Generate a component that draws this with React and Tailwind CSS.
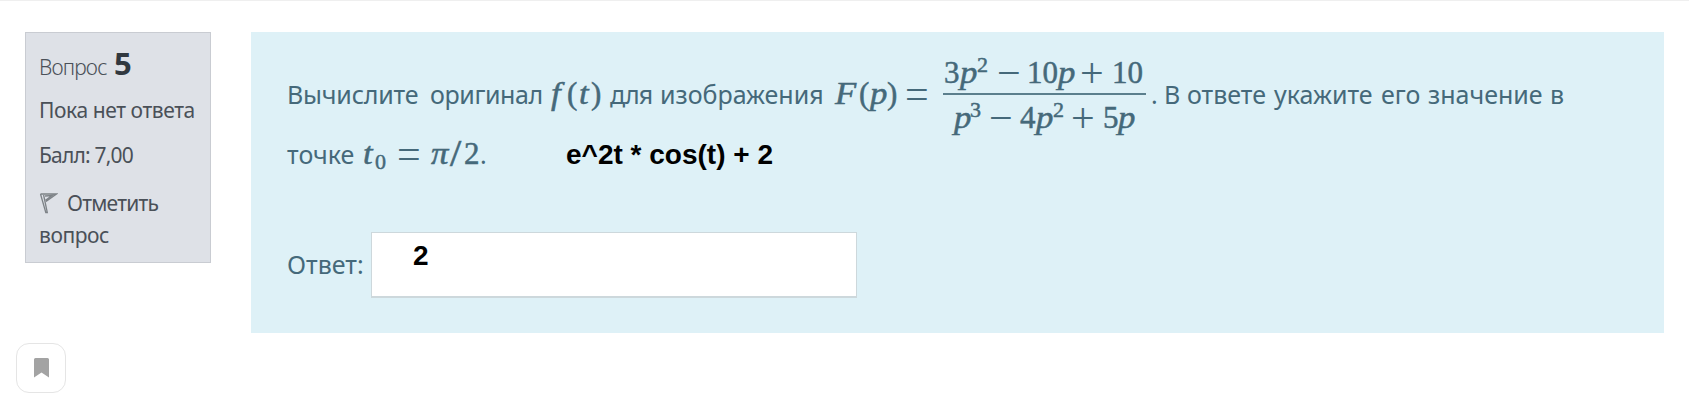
import React from "react";

const math = "font-['Liberation_Serif',serif] text-[31px] [-webkit-text-stroke:0.5px_#45697a]";

function Cell({ w, className = "", children }) {
  return (
    <span className={`block shrink-0 whitespace-nowrap ${className}`} style={{ width: w }}>
      {children}
    </span>
  );
}

function M({ w, className = "", children }) {
  return <Cell w={w} className={`${math} ${className}`}>{children}</Cell>;
}

function V({ w, children }) {
  return (
    <Cell w={w} className={`${math} italic`}>
      <span className="inline-block origin-left scale-x-[1.12]">{children}</span>
    </Cell>
  );
}

function Op({ w, children }) {
  return (
    <Cell w={w} className="font-['Liberation_Serif',serif] text-[42px]">
      <span className="relative top-[4px]">{children}</span>
    </Cell>
  );
}

function Sup({ w, children }) {
  return (
    <Cell w={w} className="relative -top-[11px] font-['Liberation_Serif',serif] text-[22px] [-webkit-text-stroke:0.5px_#45697a]">
      {children}
    </Cell>
  );
}

function Formula() {
  return (
    <div className="w-[203px] shrink-0 leading-[40px]">
      <div className="flex h-[46px] items-baseline border-b-2 border-[#5b7f8d] pl-px">
        <M w={16}>3</M>
        <V w={17}>p</V>
        <Sup w={20}>2</Sup>
        <Op w={30}>−</Op>
        <M w={31}>10</M>
        <V w={22}>p</V>
        <Op w={32}>+</Op>
        <M w={31}>10</M>
      </div>
      <div className="-mt-px flex h-[45px] items-baseline pl-[11px]">
        <V w={16}>p</V>
        <Sup w={19}>3</Sup>
        <Op w={31}>−</Op>
        <M w={16}>4</M>
        <V w={17}>p</V>
        <Sup w={18}>2</Sup>
        <Op w={32}>+</Op>
        <M w={15}>5</M>
        <V w={16}>p</V>
      </div>
    </div>
  );
}

function QuestionInfo() {
  return (
    <aside className="mt-[31px] ml-[25px] h-[231px] w-[186px] shrink-0 border border-[#c9ccd2] bg-[#dee1e7] pl-[13px] text-[21px] leading-[32px] text-[#4a5058]">
      <div className="mt-[14px] flex items-baseline whitespace-nowrap">
        <Cell w={75} className="text-[21px] font-light tracking-[-0.8px]">Вопрос</Cell>
        <span className="text-[31px] font-bold text-[#31383f]">5</span>
      </div>
      <p className="mt-[11px] tracking-[-0.4px] whitespace-nowrap">Пока нет ответа</p>
      <p className="mt-[13px] tracking-[-0.8px] whitespace-nowrap">Балл: 7,00</p>
      <div className="mt-[16px] flex items-center">
        <svg className="mr-[9px] h-[22px] w-[19px]" viewBox="0 0 19 22" fill="none" stroke="#7d8287" strokeWidth="1.3">
          <path d="M1.5 2 H17.5 L7 9.5 M1.5 2 L6.8 20.5 H8.3 L4.6 3 M6 4 L13 3.6 L6.6 8.3" />
        </svg>
        <span className="tracking-[-0.75px]">Отметить</span>
      </div>
      <p className="tracking-[-0.45px]">вопрос</p>
    </aside>
  );
}

export default function App() {
  return (
    <div className="h-[410px] w-full overflow-hidden border-t border-[#efefef] bg-white font-['Noto_Sans',sans-serif]">
      <div className="flex h-[332px]">
        <QuestionInfo />
        <main className="mt-[31px] ml-[40px] h-[301px] w-[1413px] shrink-0 bg-[#def1f7] pl-[36px] text-[25px] text-[#45697a]">
          <div className="flex h-[98px]">
            <div className="mt-[38px] flex items-baseline leading-[40px]">
              <Cell w={143} className="tracking-[-0.2px]">Вычислите</Cell>
              <Cell w={121} className="tracking-[-0.4px]">оригинал</Cell>
              <V w={16}>f</V>
              <M w={12}>(</M>
              <V w={12}>t</V>
              <M w={19}>)</M>
              <Cell w={50} className="tracking-[-0.9px]">для</Cell>
              <Cell w={175}>изображения</Cell>
              <V w={24}>F</V>
              <M w={11}>(</M>
              <V w={17}>p</V>
              <M w={18}>)</M>
              <Op w={38}>=</Op>
            </div>
            <div className="mt-[17px]"><Formula /></div>
            <div className="mt-[38px] flex items-baseline leading-[40px]">
              <Op w={5}>{"\u00a0"}</Op>
              <Cell w={13}>.</Cell>
              <Cell w={23}>В</Cell>
              <Cell w={87}>ответе</Cell>
              <Cell w={107}>укажите</Cell>
              <Cell w={47}>его</Cell>
              <Cell w={122}>значение</Cell>
              <Cell w={20}>в</Cell>
            </div>
          </div>
          <div className="flex h-[60px] items-baseline leading-[40px]">
            <Cell w={76}>точке</Cell>
            <V w={12}>t</V>
            <Cell w={22} className="relative top-[5px] font-['Liberation_Serif',serif] text-[22px] [-webkit-text-stroke:0.5px_#45697a]">0</Cell>
            <Op w={34}>=</Op>
            <V w={19}>π</V>
            <M w={14}><span className="inline-block origin-left scale-x-[1.3] scale-y-[1.2]">/</span></M>
            <M w={16}>2</M>
            <Cell w={86}>.</Cell>
            <span className="font-['Liberation_Sans',sans-serif] text-[28px] font-bold whitespace-pre text-black">e^2t * cos(t) + 2</span>
          </div>
          <div className="mt-[42px] flex items-center">
            <Cell w={84}>Ответ:</Cell>
            <div className="h-[66px] w-[486px] border border-b-2 border-[#cdd8dc] bg-white pt-[7px] pl-[41px] font-['Liberation_Sans',sans-serif] text-[28px] leading-[32px] font-bold text-black">2</div>
          </div>
        </main>
      </div>
      <button className="mt-[10px] ml-[16px] flex h-[50px] w-[50px] items-center justify-center rounded-[13px] border border-[#e5e5e5] bg-white">
        <svg className="h-[20px] w-[15px]" viewBox="0 0 15 20" fill="#a3a3a3">
          <path d="M1.5 0h12Q15 0 15 1.5V19.5L7.5 14.5 0 19.5V1.5Q0 0 1.5 0Z" />
        </svg>
      </button>
    </div>
  );
}
